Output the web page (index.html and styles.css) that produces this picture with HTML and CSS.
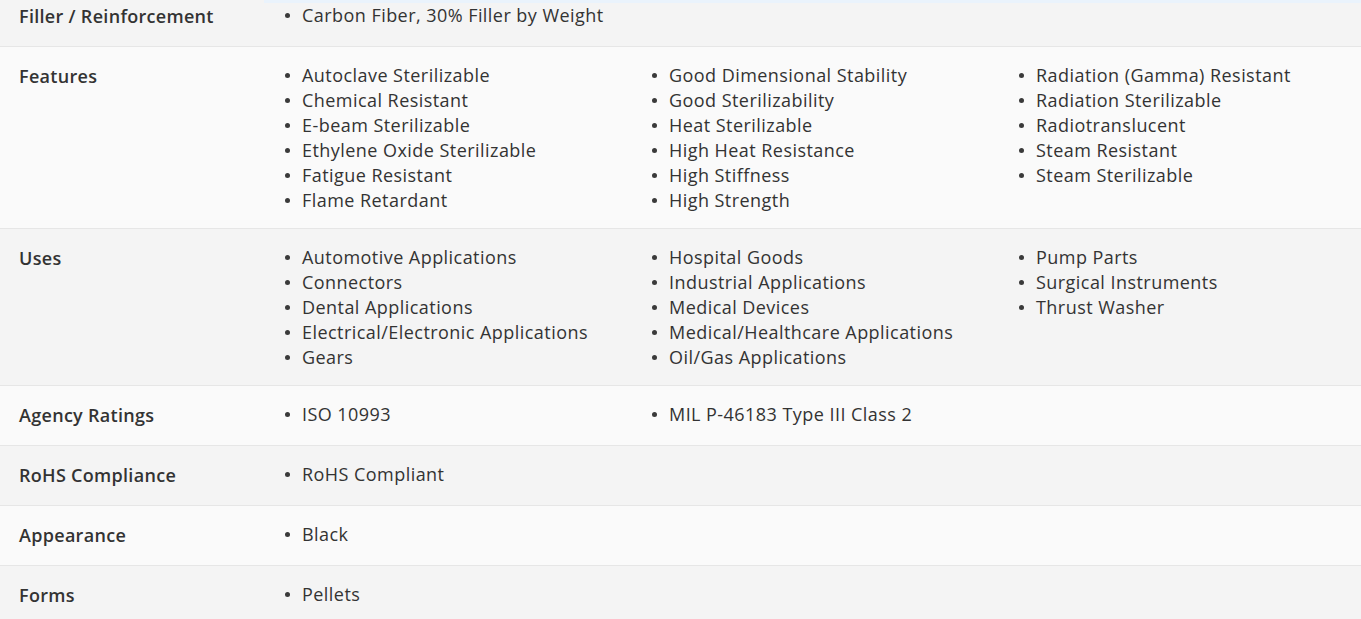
FILE: index.html
```
<!DOCTYPE html>
<html>
<head>
<meta charset="utf-8">
<link rel="stylesheet" href="styles.css">
</head>
<body>
<div class="topstrip"></div>
<div class="props">
  <div class="row odd">
    <div class="label">Filler / Reinforcement</div>
    <div class="values">
      <ul class="col"><li>Carbon Fiber, 30% Filler by Weight</li></ul>
    </div>
  </div>
  <div class="row even">
    <div class="label">Features</div>
    <div class="values">
      <ul class="col">
        <li>Autoclave Sterilizable</li>
        <li>Chemical Resistant</li>
        <li>E-beam Sterilizable</li>
        <li>Ethylene Oxide Sterilizable</li>
        <li>Fatigue Resistant</li>
        <li>Flame Retardant</li>
      </ul>
      <ul class="col">
        <li>Good Dimensional Stability</li>
        <li>Good Sterilizability</li>
        <li>Heat Sterilizable</li>
        <li>High Heat Resistance</li>
        <li>High Stiffness</li>
        <li>High Strength</li>
      </ul>
      <ul class="col">
        <li>Radiation (Gamma) Resistant</li>
        <li>Radiation Sterilizable</li>
        <li>Radiotranslucent</li>
        <li>Steam Resistant</li>
        <li>Steam Sterilizable</li>
      </ul>
    </div>
  </div>
  <div class="row odd">
    <div class="label">Uses</div>
    <div class="values">
      <ul class="col">
        <li>Automotive Applications</li>
        <li>Connectors</li>
        <li>Dental Applications</li>
        <li>Electrical/Electronic Applications</li>
        <li>Gears</li>
      </ul>
      <ul class="col">
        <li>Hospital Goods</li>
        <li>Industrial Applications</li>
        <li>Medical Devices</li>
        <li>Medical/Healthcare Applications</li>
        <li>Oil/Gas Applications</li>
      </ul>
      <ul class="col">
        <li>Pump Parts</li>
        <li>Surgical Instruments</li>
        <li>Thrust Washer</li>
      </ul>
    </div>
  </div>
  <div class="row even">
    <div class="label">Agency Ratings</div>
    <div class="values">
      <ul class="col"><li>ISO 10993</li></ul>
      <ul class="col"><li>MIL P-46183 Type III Class 2</li></ul>
    </div>
  </div>
  <div class="row odd">
    <div class="label">RoHS Compliance</div>
    <div class="values">
      <ul class="col"><li>RoHS Compliant</li></ul>
    </div>
  </div>
  <div class="row even">
    <div class="label">Appearance</div>
    <div class="values">
      <ul class="col"><li>Black</li></ul>
    </div>
  </div>
  <div class="row odd">
    <div class="label">Forms</div>
    <div class="values">
      <ul class="col"><li>Pellets</li></ul>
    </div>
  </div>
</div>
</body>
</html>
```
FILE: styles.css
```
html, body {
  margin: 0;
  padding: 0;
  background: #f4f4f4;
}
body {
  font-family: "Open Sans", "Noto Sans", sans-serif;
  color: #333333;
  overflow: hidden;
}
.topstrip {
  position: fixed;
  top: 0;
  left: 264px;
  right: 0;
  height: 3px;
  background: #eaf3fc;
  z-index: 2;
}
.props {
  margin-top: -13px;
}
.row {
  display: flex;
  padding: 16px 0 15px 0;
  border-bottom: 1px solid #e6e6e6;
}
.row.odd { background: #f4f4f4; }
.row.even { background: #fafafa; }
.label {
  flex: 0 0 245px;
  padding-left: 19px;
  padding-bottom: 2px;
  font-size: 18px;
  font-weight: 600;
  line-height: 26px;
  letter-spacing: 0.3px;
}
.values {
  flex: 1 1 auto;
  display: grid;
  grid-template-columns: 367px 367px 1fr;
  font-size: 18px;
  line-height: 25px;
  letter-spacing: 0.45px;
}
.col {
  list-style: none;
  margin: 0;
  padding: 0 0 0 38px;
}
.col li {
  position: relative;
  white-space: nowrap;
}
.col li::before {
  content: "";
  position: absolute;
  left: -17px;
  top: 10px;
  width: 5px;
  height: 5px;
  border-radius: 50%;
  background: #3a3a3a;
}
```
